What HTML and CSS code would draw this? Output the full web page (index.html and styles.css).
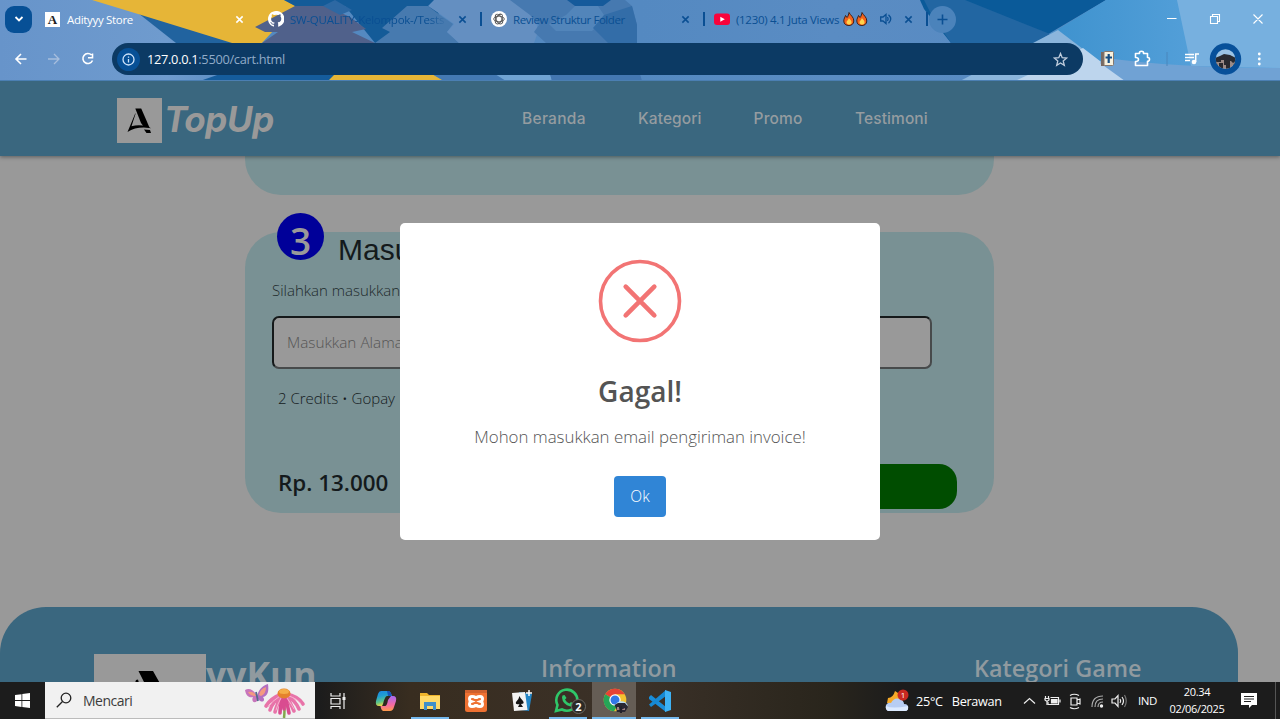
FILE: index.html
```html
<!DOCTYPE html>
<html lang="id">
<head>
<meta charset="utf-8">
<title>Adityyy Store</title>
<link rel="stylesheet" href="styles.css">
</head>
<body>
<div class="screen">
<header class="chrome">
  <svg class="theme" width="1280" height="81" viewBox="0 0 1280 81">
    <defs>
      <linearGradient id="sky" x1="0" y1="0" x2="1" y2="0"><stop offset="0" stop-color="#6794ca"/><stop offset=".13" stop-color="#6f9bce"/><stop offset=".2" stop-color="#5489c0"/><stop offset=".5" stop-color="#5489c1"/><stop offset=".65" stop-color="#5a8cc3"/><stop offset="1" stop-color="#5589c1"/></linearGradient>
      <linearGradient id="ice" x1="0" y1="0" x2="1" y2="0"><stop offset="0" stop-color="#3e92ce"/><stop offset="1" stop-color="#60a7df"/></linearGradient>
    </defs>
    <rect width="1280" height="81" fill="url(#sky)"/>
    <path d="M138 13L240 43H176Z" fill="#21639f"/>
    <path d="M92 0H284L296 6L262 43H232L138 14Z" fill="#e6b537"/>
    <path d="M284 0H434L448 43H375L345 6H295Z" fill="#145b98"/>
    <path d="M262 43L278 32H265L255 27L295 6H326L350 17L366 29L352 32L375 43Z" fill="#50618b"/>
    <path d="M323 6L335 0L352 10L340 15Z" fill="#2d68a3"/>
    <path d="M375 43L390 32L382 28L407 6H428L440 15L453 24L447 32L459 43Z" fill="#477aaf"/>
    <path d="M434 0H515L535 15L538 32L534 43H459L447 32L454 24L440 14L428 6Z" fill="#648fc1"/>
    <path d="M510 0H625L632 6L637 25V43H546L534 32L539 25L530 15Z" fill="#4679b0"/>
    <path d="M549 24L566 15L575 6H598L606 18L592 31H556Z" fill="#5285ba"/>
    <path d="M593 28L604 15L632 6L637 25V43H608Z" fill="#336da8"/>
    <path d="M567 0H611L603 6H575Z" fill="#155a9b"/>
    <path d="M200 81L220 74H342L330 81Z" fill="#155c9c"/>
    <path d="M328 81L335 74H432L444 81Z" fill="#e6b537"/>
    <path d="M432 74H497L506 81H444Z" fill="#4479b3"/>
    <path d="M495 74H550L552 81H506Z" fill="#70a3d3"/>
    <path d="M550 74H640L642 81H552Z" fill="#4477b1"/>
    <path d="M920 0H1106L1033 43H951L924 9Z" fill="#0a5a99"/>
    <path d="M924 0H965L1050 34L1035 43H951L930 12Z" fill="#2266a2"/>
    <path d="M1106 0H1280V81H1110L1050 34Z" fill="url(#ice)"/>
    <path d="M1058 30L1125 81H960L1033 43Z" fill="#8bb5dc"/>
    <path d="M1083 48L1126 81H1015L1030 74Z" fill="#bdd5ed"/>
    <path d="M1177 0H1280V68L1191 66Z" fill="#77b0df"/>
    <path d="M1106 58Q1180 68 1280 68V81H1125L1100 63Z" fill="#70a2d4"/>
    <path d="M0 80.500H1280" stroke="#4b7fb2"/>
  </svg>
  <div class="tabs">
    <div class="tabsearch"><svg width="10" height="8" viewBox="0 0 10 8"><path d="M1.500 2L5 5.500L8.500 2" fill="none" stroke="#fff" stroke-width="1.800"/></svg></div>
    <div class="tab tab-a"><span class="fav-a">A</span><span class="tt w">Adityyy Store</span><svg class="x w" viewBox="0 0 10 10"><path d="M1.500 1.500L8.500 8.500M8.500 1.500L1.500 8.500"/></svg></div>
    <div class="tab tab-b"><svg class="fav" viewBox="0 0 16 16"><path fill="#fff" d="M8 0C3.580 0 0 3.580 0 8c0 3.540 2.290 6.530 5.470 7.590.4.070.55-.17.55-.38v-1.490C4 14.160 3.480 12.780 3.480 12.780c-.36-.92-.9-1.200-.9-1.200-.8-.5 0-.5 0-.5.800 0 1.300.9 1.300.9.7 1.200 1.900.9 2.300.7.100-.5.300-.9.500-1.100-1.800-.2-3.600-.9-3.600-4 0-.9.300-1.600.8-2.200-.1-.2-.4-1 .1-2.100 0 0 .7-.2 2.200.8a7.500 7.500 0 014 0c1.500-1 2.200-.8 2.200-.8.500 1.100.2 1.900.1 2.100.5.600.8 1.300.8 2.200 0 3.100-1.900 3.700-3.600 4 .3.200.5.700.5 1.500v2.200c0 .2.100.5.500.4A8 8 0 008 0z"/></svg><span class="tt long">SW-QUALITY-Kelompok-/Tests</span><svg class="x" viewBox="0 0 10 10"><path d="M1.500 1.500L8.500 8.500M8.500 1.500L1.500 8.500"/></svg></div>
    <i class="sep"></i>
    <div class="tab tab-c"><svg class="fav" viewBox="0 0 16 16"><circle cx="8" cy="8" r="8" fill="#fff"/><g fill="none" stroke="#555" stroke-width=".9"><ellipse cx="8" cy="8" rx="5.300" ry="2.800"/><ellipse cx="8" cy="8" rx="5.300" ry="2.800" transform="rotate(60 8 8)"/><ellipse cx="8" cy="8" rx="5.300" ry="2.800" transform="rotate(120 8 8)"/></g></svg><span class="tt">Review Struktur Folder</span><svg class="x" viewBox="0 0 10 10"><path d="M1.500 1.500L8.500 8.500M8.500 1.500L1.500 8.500"/></svg></div>
    <i class="sep"></i>
    <div class="tab tab-d"><svg class="fav" viewBox="0 0 16 16"><rect y="2.500" width="16" height="11.500" rx="3" fill="#f8033b"/><path d="M6.300 5.700L10.800 8.200L6.300 10.700Z" fill="#fff"/></svg><span class="tt">(1230) 4.1 Juta Views</span>
      <svg class="fires" width="27" height="14" viewBox="0 0 27 14"><g id="fire"><path d="M6 .5C7 3 11 5 10.800 9C10.700 12 8.500 13.500 6 13.500C3 13.500.8 12 .8 9C.8 6.500 2 5.500 2.500 3.500L4 5.500C5.500 4 5.500 2 6 .5Z" fill="#f4621c" stroke="#3b211b" stroke-width="1"/><path d="M6 6C7 8 9 8.500 8.500 11C8 13 4 13.200 3.500 10.500C3.300 9 5 8.500 6 6Z" fill="#ffd34b"/></g><use href="#fire" x="13"/></svg>
      <svg class="audio" width="12" height="12" viewBox="0 0 12 12" fill="none" stroke="#0a4f93" stroke-width="1.300"><path d="M.7 4H3L6 1.500V10.500L3 8H.7Z"/><path d="M7.500 4Q8.800 6 7.500 8M8.500 1.800Q13 6 8.500 10.200"/></svg>
      <svg class="x" viewBox="0 0 10 10"><path d="M1.500 1.500L8.500 8.500M8.500 1.500L1.500 8.500"/></svg></div>
    <i class="sep"></i>
    <div class="plus"><svg width="11" height="11" viewBox="0 0 11 11"><path d="M5.500 .5V10.500M.5 5.500H10.500" stroke="#0a4f93" stroke-width="1.600"/></svg></div>
    <svg class="winctl" width="98" height="14" viewBox="0 0 98 14" fill="none" stroke="#fff" stroke-width="1.100"><path d="M1 6.500H10.500M44.500 4.500H51.500V11.500H44.500ZM46.500 4.500V2.500H53.500V9.500H51.500M87.500 2.500L96.500 11.500M96.500 2.500L87.500 11.500"/></svg>
  </div>
  <div class="tools">
    <svg class="navico" width="84" height="16" viewBox="0 0 84 16" fill="none" stroke="#fff" stroke-width="1.600"><path d="M12.500 8H2M7 3L2 8L7 13"/><path d="M34 8H45M40 3L45 8L40 13" stroke="#a7bedd" stroke-width="1.300"/><path d="M77.500 4A5 5 0 1 0 78.500 9.500M78.500 2.500V6.800H74"/></svg>
    <div class="omni">
      <span class="info"><svg width="13" height="13" viewBox="0 0 13 13" fill="none" stroke="#cfe4fb" stroke-width="1.300"><circle cx="6.500" cy="6.500" r="5.500"/><path d="M6.500 6V9.500M6.500 3.400V4.700"/></svg></span>
      <span class="url"><b>127.0.0.1</b>:5500/cart.html</span>
      <svg class="star" width="15" height="15" viewBox="0 0 15 15"><path d="M7.500 1.500L9.200 5.700L13.700 6L10.200 8.900L11.300 13.300L7.500 10.900L3.700 13.300L4.800 8.900L1.300 6L5.800 5.700Z" fill="none" stroke="#c0cddd" stroke-width="1.300"/></svg>
    </div>
    <svg class="ext" width="186" height="32" viewBox="0 0 186 32">
      <rect x="18" y="9" width="4" height="14" fill="#786a63"/><rect x="21" y="8.500" width="9.500" height="14" rx="1" fill="#f7f1de" stroke="#85786f"/><path d="M25.700 11V20M22.500 14.500H29" stroke="#164e84" stroke-width="2.200"/>
      <path d="M52.500 10.500H56.500Q56 8.300 58.500 8.300T60.500 10.500H64.500V14.500Q66.500 14.200 66.500 16.200T64.500 18.300V22.500H52.500V18.500Q55.500 18.500 55.500 16.500T52.500 14.500Z" fill="none" stroke="#fff" stroke-width="1.600" stroke-linejoin="round"/>
      <path d="M84 9V23" stroke="#4a86bc"/>
      <path d="M102 11.500H111M102 14.500H111M102 17.500H107" stroke="#fff" stroke-width="1.500"/><path d="M112.700 19V11H116" fill="none" stroke="#fff" stroke-width="1.500"/><circle cx="111" cy="19" r="2.300" fill="#fff"/>
      <circle cx="142.500" cy="16" r="15.700" fill="#07509a"/><clipPath id="av"><circle cx="142.500" cy="16" r="9.800"/></clipPath><g clip-path="url(#av)"><path d="M132 6H153V26H132Z" fill="#9bc3e4"/><path d="M132 15L137 13L141 11L147 12L153 15V22H132Z" fill="#292b31"/><path d="M132 19H138V17H141V22H145V18H148L150 20L153 18V26H132Z" fill="#9b8a86"/><path d="M136 20H140V26H136ZM143 18H147V26H143Z" fill="#292a30"/></g>
      <g fill="#fff"><circle cx="176.300" cy="11" r="1.400"/><circle cx="176.300" cy="16" r="1.400"/><circle cx="176.300" cy="21" r="1.400"/></g>
    </svg>
  </div>
</header>

<main class="site">
  <nav class="bar">
    <svg class="logo" width="45" height="45" viewBox="0 0 45 45"><rect width="45" height="45" fill="#999"/><path d="M18.300 10.500H24.200L32.500 29.500L27 29L24 25Z"/><path d="M18.800 15L14.500 28.200Q22 26 31 28.500L34 30.200Q20 28 10.500 34L18 16ZM27 31.500L33 32L34 35H29.500Z"/></svg>
    <span class="brand">TopUp</span>
    <span class="links"><a class="l1">Beranda</a><a class="l2">Kategori</a><a class="l3">Promo</a><a class="l4">Testimoni</a></span>
  </nav>
  <div class="content">
    <section class="card prev"></section>
    <section class="card form">
      <div class="step"><span class="num"><span>3</span></span><h2>Masukkan</h2></div>
      <p class="hint">Silahkan masukkan email</p>
      <div class="input">Masukkan Alamat Email</div>
      <p class="order">2 Credits • Gopay</p>
      <div class="pay"><strong>Rp. 13.000</strong><span class="buy"></span></div>
    </section>
  </div>
  <footer class="foot">
    <svg class="flogo" width="112" height="40" viewBox="0 0 112 40"><path d="M0 0H112V40H0Z" fill="#999"/><path d="M44.500 17H59L72 40H56ZM42 26L44 25.500L45 29H41Z"/></svg>
    <span class="fname">yyKun</span>
    <span class="finfo">Information</span>
    <span class="fcat">Kategori Game</span>
  </footer>
  <div class="modal">
    <svg width="84" height="84" viewBox="0 0 84 84" fill="none" stroke="#f27474"><circle cx="42" cy="42" r="39.500" stroke-width="3.600"/><path d="M27.700 27.700L56.300 56.300M56.300 27.700L27.700 56.300" stroke-width="4.600" stroke-linecap="round"/></svg>
    <h3>Gagal!</h3>
    <p>Mohon masukkan email pengiriman invoice!</p>
    <button>Ok</button>
  </div>
</main>

<div class="task">
  <svg class="start" width="15" height="15" viewBox="0 0 15 15"><path d="M0 2L6.500 1.200V7H0ZM7.300 1L15 0V7H7.300ZM0 8H6.500V13.900L0 13ZM7.300 8H15V15L7.300 14Z" fill="#fff"/></svg>
  <div class="search">
    <svg width="16" height="16" viewBox="0 0 16 16" fill="none" stroke="#222" stroke-width="1.300"><circle cx="10" cy="6" r="4.800"/><path d="M6.500 9.500L.8 15.200"/></svg><span>Mencari</span>
    <svg class="bloom" width="62" height="35" viewBox="0 0 62 35">
      <path d="M40 19Q41 26 40 35" fill="none" stroke="#84a64c" stroke-width="2.500"/>
      <g fill="none" stroke-linecap="round" stroke-width="3.600"><path d="M38 11Q27 15 22 23M38 12Q29 18 26 27M39 12Q33 20 31 29M41 12Q47 20 50 28M42 12Q51 17 55 26M42 11Q54 13 59 21" stroke="#e873a9"/><path d="M39 14Q36 23 36 30M41 14Q44 23 45 30M40 14V26" stroke="#d94c90"/><path d="M36 13Q28 18 24 24M37 15Q33 22 32 27M43 15Q48 22 50 26M45 13Q54 16 57 21" stroke="#f8b2cf" stroke-width="1"/></g>
      <ellipse cx="40" cy="10.500" rx="6.500" ry="5" fill="#e5822d"/><ellipse cx="40" cy="8.500" rx="5" ry="2.500" fill="#f5ad48"/>
      <path d="M13 13C9 6 5 5 1 7C2 13 5 15 9 14C7 18 10 21 13 18L14 15Z" fill="#c775bb"/><path d="M13 13C15 5 20 2 24 1C25 8 24 13 19 14C22 18 18 21 14 16Z" fill="#b46fc0"/><path d="M12 12Q9 8 4 9Q6 13 12 13ZM15 12Q16 6 22 4Q22 11 17 13Z" fill="#f49a80"/><path d="M12 9L14 18" stroke="#536b8c" stroke-width="1.800"/>
    </svg>
  </div>
  <div class="apps">
    <span class="app"><svg width="18" height="18" viewBox="0 0 18 18" fill="none" stroke="#eee" stroke-width="1.200"><path d="M2 1V4H11V1M2 6.500H11V12H2ZM2 17V14.500H11V17M15 1V17"/><path d="M13.500 5H16.500V8H13.500Z" fill="#eee" stroke="none"/></svg></span>
    <span class="app app2"><svg width="22" height="22" viewBox="0 0 22 22"><defs><linearGradient id="c1" x2=".3" y2="1"><stop stop-color="#1b83e6"/><stop offset=".4" stop-color="#209fd1"/><stop offset=".75" stop-color="#62c783"/><stop offset="1" stop-color="#f3d647"/></linearGradient><linearGradient id="c2" x2="0" y2="1"><stop stop-color="#a76af3"/><stop offset=".6" stop-color="#f66aa0"/><stop offset="1" stop-color="#ff9c49"/></linearGradient></defs><path d="M6 1H14Q16 2 17 6L12 6Q10 6 8 14L7 16H4Q0 16 1 11L3 4Q4 1 6 1Z" fill="url(#c1)"/><path d="M12 1H14Q16 2 17 6H13Z" fill="#1656bd"/><path d="M16 6H18Q22 6 21 11L19 17Q18 21 15 21H8Q6 20 5.500 16H10Q12 16 13 10Z" fill="url(#c2)"/></svg></span>
    <span class="app on"><svg width="20" height="20" viewBox="0 0 20 20"><path d="M0 2H7L9 4H20V18H0Z" fill="#eeb42c"/><path d="M0 5H20V18H0Z" fill="#ffd968"/><path d="M4 11H16V19H13V15H7V19H4Z" fill="#408fc9"/></svg></span>
    <span class="app"><svg width="22" height="22" viewBox="0 0 22 22"><rect width="22" height="22" rx="2.500" fill="#ef7132"/><path d="M0 0H22V3H0Z" fill="#cf612f"/><path d="M7 6.500Q11 6.500 11 9Q11 6.500 15 6.500Q17.500 6.500 17.500 9Q17.500 11 16 11.500Q17.500 12 17.500 14Q17.500 16.500 15 16.500Q11 16.500 11 14Q11 16.500 7 16.500Q4.500 16.500 4.500 14Q4.500 12 6 11.500Q4.500 11 4.500 9Q4.500 6.500 7 6.500Z" fill="none" stroke="#fff" stroke-width="3"/></svg></span>
    <span class="app"><svg width="22" height="22" viewBox="0 0 22 22"><path d="M8 2L21 4L18 21L10 20Z" fill="#2486c6"/><path d="M1 3L14 2L16.500 20L3 21Z" fill="#f3f3f3"/><path d="M8.500 6Q9 8 12 11Q14 14 10 14L12 17H7L8.500 14Q4 15 5 12Q8 9 8.500 6Z" fill="#151515"/><path d="M18 0V6M15 3H21" stroke="#fff" stroke-width="1.500"/></svg></span>
    <span class="app on"><svg class="wa" width="32" height="26" viewBox="0 0 32 26"><path d="M2 23L3.500 17A10.500 10.500 0 1 1 8 21.500Z" fill="none" stroke="#2fc769" stroke-width="2.600"/><path d="M8.500 7.500L10.500 7L12.500 10L11 11.500Q12.500 14.500 15.500 15.500L17 14L19.500 15.500Q19.500 18.500 16.500 18.500Q8.500 16.500 8 9.500Z" fill="#2fc769"/><circle cx="24.500" cy="18.500" r="7" fill="#2c2a26" stroke="#6d6a64"/><text x="24.500" y="22.500" text-anchor="middle" class="badge">2</text></svg></span>
    <span class="app on active"><svg class="gc" width="26" height="26" viewBox="0 0 26 26"><circle cx="12" cy="12" r="11.300" fill="#f3c330"/><path d="M12 12L2.200 6.300A11.300 11.300 0 0 1 21.800 6.300H12Z" fill="#e64235"/><path d="M12 12L2.200 6.300A11.300 11.300 0 0 0 11 23.300L16 15Z" fill="#25a557"/><circle cx="12" cy="12" r="5.700" fill="#fff"/><circle cx="12" cy="12" r="4.500" fill="#3177e7"/><path d="M12 18A6.800 6.800 0 0 1 25 18L22 16L16 15Z" fill="#b5d9f0"/><path d="M11.500 17L15 15L22 15L25 19L22 24H14L13 20Z" fill="#292733"/><path d="M14 19H16L18 22L22 20V22H14Z" fill="#a18183"/><path d="M16 19L19 18V25H17Z" fill="#22212a"/></svg></span>
    <span class="app on"><svg width="24" height="24" viewBox="0 0 24 24"><path d="M1 8L3 6L18 18V23L1 10Z" fill="#198dd9"/><path d="M1 15.500L18 1V7L3 18Z" fill="#1689d3"/><path d="M17 1L23 3V21L17 23Z" fill="#3eb2f4"/></svg></span>
  </div>
  <div class="weather"><svg width="26" height="24" viewBox="0 0 26 24"><path d="M10 2Q8 9 3 9L2 14H18L16 6Z" fill="#f6a928"/><path d="M3 22Q0 20 1 16Q3 13 6 14Q9 8 15 10Q19 12 19 15Q24 15 23 20Q22 22 20 22Z" fill="#b7cdf3"/><path d="M3 22Q0 20 1 17Q7 20 23 17Q24 22 20 22Z" fill="#dceaff"/><circle cx="18" cy="6" r="5.500" fill="#ca2921"/><text x="18" y="9" text-anchor="middle" class="wn">1</text></svg><span>25°C</span><span class="cloudy">Berawan</span></div>
  <svg class="tray" width="104" height="20" viewBox="0 0 104 20" fill="none" stroke="#eee" stroke-width="1.200">
    <path d="M1 12.500L6.500 7.500L12 12.500"/><path d="M27.500 6.500H35.500V13.500H25V11M37 8.500V11.500"/><path d="M28.500 8.500H34V12H28.500Z" fill="#eee"/><path d="M22.500 5V7M25.500 5V7M22 7.500H26V9L24 10.500L22 9ZM24 10V14" stroke-width="1.200"/>
    <path d="M48 7H54V14H48ZM54 9L57 8V13L54 12M47 4.500Q51 2 56 4.500M47 16.500Q51 19 56 16.500"/>
    <path d="M69 16Q69 5 80 5M72 16Q72 8 80 8M75 16Q75 11 80 11" stroke="#aaa"/><circle cx="78.500" cy="15" r="1.700" fill="#eee" stroke="none"/>
    <path d="M89 8H92L95 4.500V15.500L92 12H89ZM97 8Q98.500 10 97 12M99 6Q102 10 99 14"/><path d="M101.500 4Q105 10 101.500 16" stroke="#777"/>
  </svg>
  <span class="lang">IND</span>
  <div class="clock"><span>20.34</span><span>02/06/2025</span></div>
  <svg class="note" width="16" height="15" viewBox="0 0 16 15"><path d="M0 0H16V12H11L8 15V12H0Z" fill="#fff"/><path d="M3 3.500H13M3 6H13M3 8.500H10" stroke="#222" stroke-width="1"/></svg>
  <i class="edge"></i>
</div>
</div>
</body>
</html>
```
FILE: styles.css
```css
* { box-sizing: border-box; }
body { margin: 0; font-family: "Open Sans", "Noto Sans", sans-serif; }
h2, h3, p { margin: 0; }
svg { display: block; flex: none; }
.screen { width: 1280px; height: 719px; overflow: hidden; display: flex; flex-direction: column; }

.chrome { position: relative; height: 81px; flex: none; }
.theme { position: absolute; inset: 0; }
.tabs, .tools { position: relative; display: flex; align-items: center; }
.tabs { height: 38px; padding-left: 5px; }
.tools { height: 42px; padding-left: 14px; }
.tabsearch { width: 27px; height: 27px; border-radius: 9px; background: #075096; display: grid; place-items: center; }
.tab { display: flex; align-items: center; height: 27px; }
.tab-a { width: 223px; padding-left: 13px; }
.tab-b { width: 225px; padding-left: 13px; }
.tab-c { width: 221px; padding-left: 9px; }
.tab-d { width: 221px; padding-left: 9px; }
.fav { width: 16px; height: 16px; }
.fav-a { width: 15px; height: 15px; background: #fff; color: #222; font: bold 13px/15px "Liberation Serif", serif; text-align: center; }
.tt { margin-left: 6px; color: #0a4f93; font-size: 11.5px; letter-spacing: -.45px; white-space: nowrap; }
.tt.w { color: #fff; margin-left: 7px; letter-spacing: -.32px; }
.tab-d .tt { letter-spacing: -.3px; }
.tt.long { width: 157px; overflow: hidden; letter-spacing: -.25px; mask-image: linear-gradient(90deg, #000 88%, transparent); }
.x { width: 9px; height: 9px; margin-left: auto; stroke: #0a4f93; stroke-width: 1.7; }
.x.w { stroke: #fff; margin-right: 11px; }
.tab-b .x, .tab-c .x, .tab-d .x { margin-right: 13px; }
.fires { margin-left: auto; }
.audio { margin-left: 10px; margin-right: 12px; }
.tab-d .x { margin-left: 0; }
.sep { width: 2px; height: 14px; background: #0a4f93; }
.plus { width: 27px; height: 27px; margin-left: 1px; border-radius: 50%; background: #4b83bb; display: grid; place-items: center; }
.winctl { margin-left: auto; margin-right: 16px; }
.navico { width: 84px; }
.omni { width: 971px; height: 32px; margin-left: 14px; padding: 0 15px 0 5px; border-radius: 16px; background: #0c3a64; display: flex; align-items: center; }
.info { width: 23px; height: 23px; border-radius: 50%; background: #075096; display: grid; place-items: center; }
.url { margin-left: 7px; font-size: 12.8px; color: #91abc8; letter-spacing: -.3px; }
.url b { font-weight: 400; color: #fff; }
.star { margin-left: auto; }

.site { position: relative; height: 601px; flex: none; background: #999; overflow: hidden; display: flex; flex-direction: column; }
.bar { position: relative; height: 75px; flex: none; display: flex; align-items: center; padding: 4px 0 0 117px; background: #3a677f; box-shadow: 0 1px 4px rgba(0, 0, 0, .4); }
.brand { margin: -3px 0 0 2px; width: 114px; font: italic 700 35px/44px Inter, sans-serif; letter-spacing: -.4px; color: #999; }
.links { display: flex; margin: -4px 0 0 244px; font: 500 15.5px/20px Inter, sans-serif; color: #959ca0; }
.l1 { width: 116px; letter-spacing: .3px; }
.l2 { width: 115.5px; letter-spacing: .1px; }
.l3 { width: 101.5px; letter-spacing: .2px; }
.l4 { letter-spacing: .1px; }
.content { height: 450.6px; flex: none; display: flex; flex-direction: column; gap: 37.6px; padding-left: 245px; }
.card { width: 749px; background: #799194; }
.prev { height: 38.8px; border-radius: 0 0 36px 36px; flex: none; }
.form { height: 280.6px; border-radius: 36px; padding: 0 37px 0 27px; }
.step { display: flex; height: 46px; padding-left: 5px; margin-top: -19px; }
.num { width: 47px; height: 47px; border-radius: 50%; background: #009; color: #999; font: 600 37px/56px "Open Sans", sans-serif; text-align: center; }
.step h2 { margin-left: 14px; font: 400 30px/73px "Liberation Sans", Arial, sans-serif; color: #141a1c; }
.hint { margin-top: 20px; font-weight: 300; font-size: 15px; line-height: 22px; color: #20292b; }
.input { width: 660px; height: 53px; margin-top: 15px; padding-left: 13px; border: 2px solid; border-color: #15191a #474a4b #474a4b #15191a; border-radius: 7px; background: #999; font-weight: 300; font-size: 15.3px; line-height: 49px; color: #555; }
.order { margin: 17px 0 0 6px; font-weight: 300; font-size: 15px; line-height: 24px; color: #141a1c; }
.pay { display: flex; align-items: center; justify-content: space-between; height: 45px; margin-top: 54px; padding-left: 6px; }
.pay strong { font-size: 22.4px; font-weight: 600; color: #141a1c; margin-top: -8px; }
.buy { width: 230px; height: 45px; border-radius: 18px; background: #004d00; }
.foot { width: 1238px; height: 120px; flex: none; background: #3a677f; border-radius: 46px 46px 0 0; display: flex; padding: 47px 0 0 94px; color: #909a9f; }
.fname { width: 335px; font-size: 35.5px; font-weight: 700; line-height: 41px; }
.finfo, .fcat { font-size: 23.4px; font-weight: 600; line-height: 28px; }
.finfo { width: 433px; }
.fcat { white-space: nowrap; }
.modal { position: absolute; left: 400px; top: 142px; width: 480px; height: 317px; border-radius: 5px; background: #fff; display: flex; flex-direction: column; align-items: center; padding-top: 36px; }
.modal h3 { margin-top: 27px; font-size: 28px; line-height: 42px; font-weight: 600; color: #545454; }
.modal p { margin-top: 13px; font-size: 16.85px; line-height: 24px; font-weight: 300; color: #545454; white-space: nowrap; }
.modal button { margin-top: 26.5px; width: 52px; height: 41px; border: 0; border-radius: 4px; background: #3085d6; color: #fff; font: 300 15.5px "Open Sans", sans-serif; }

.task { height: 37px; flex: none; display: flex; align-items: center; background: linear-gradient(90deg, #1c1c1c 0 320px, #382d20 410px, #3b3128 640px, #29251c 830px, #1c1c1c 900px); color: #fff; }
.start { margin: 0 15px; }
.search { width: 270px; height: 37px; background: #f1f1f1; border-bottom: 1px solid #bbb; display: flex; align-items: center; padding-left: 11px; color: #3c3c3c; font-size: 14px; }
.search span { margin-left: 11px; letter-spacing: -.5px; }
.bloom { margin-left: auto; margin-right: 9px; }
.apps { display: flex; gap: 2px; height: 37px; padding-left: 1px; }
.app { width: 44px; height: 37px; display: grid; place-items: center; }
.app.on { background: linear-gradient(#76b9ed, #76b9ed) 50% 100% / 38px 2px no-repeat; }
.app.active { background: linear-gradient(#76b9ed, #76b9ed) 0 100% / 100% 2px no-repeat #655d55; }
.app2 { padding-left: 3px; }
.wa { margin-left: 4px; }
.gc { margin-left: 4px; }
.badge { font-size: 11px; font-weight: 700; fill: #fff; }
.wn { font-size: 8px; fill: #fff; }
.weather { display: flex; align-items: center; margin-left: 203px; width: 138px; font-size: 12.7px; letter-spacing: -.3px; }
.weather span { margin-left: 5px; }
.weather .cloudy { margin-left: 9px; }
.lang { margin-left: 11px; width: 31px; font-size: 11.5px; letter-spacing: -.4px; }
.clock { width: 56px; display: flex; flex-direction: column; align-items: center; font-size: 11px; line-height: 17px; letter-spacing: -.35px; padding-bottom: 2px; }
.note { margin-left: 16px; }
.edge { width: 1px; height: 37px; margin-left: auto; margin-right: 4px; background: #555; }
```
